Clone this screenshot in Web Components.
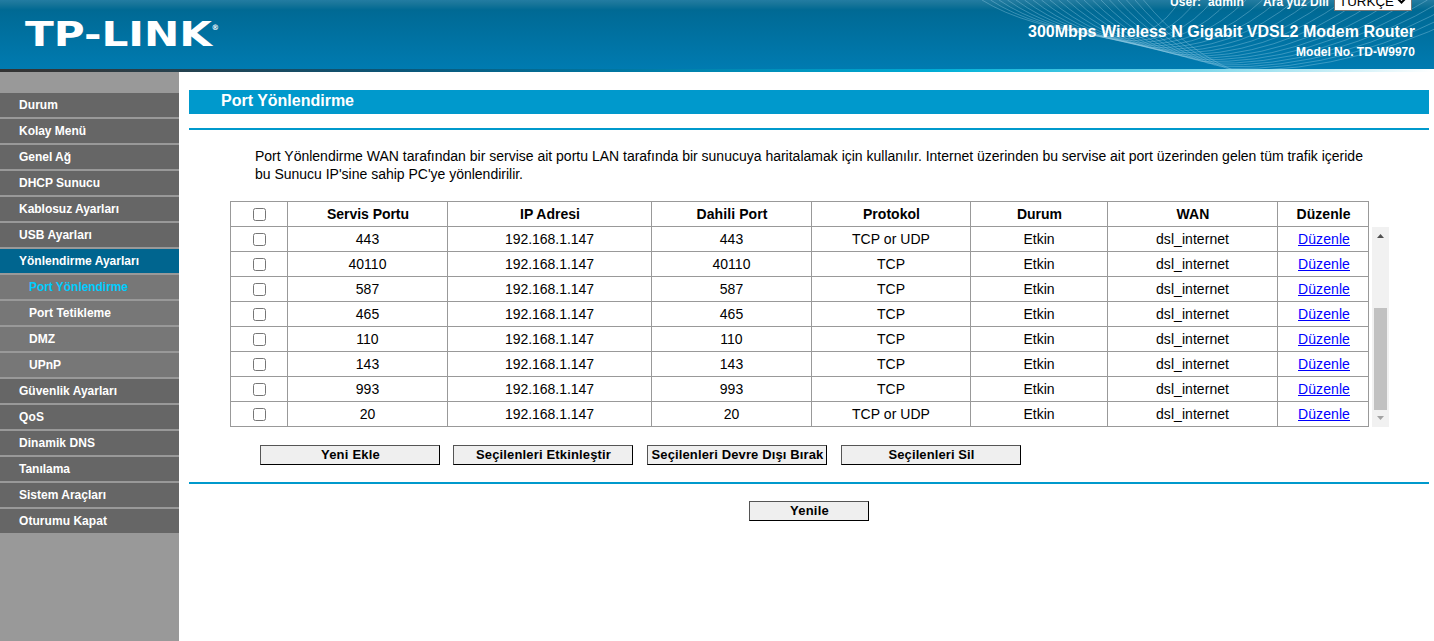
<!DOCTYPE html>
<html lang="tr">
<head>
<meta charset="utf-8">
<title>TD-W9970</title>
<style>
html,body{margin:0;height:100%;overflow:hidden;background:#fff}
body{font-family:"Liberation Sans",Arial,sans-serif;color:#000}
</style>
</head>
<body>
<router-page></router-page>
<script>
function define(name, html, setup) {
  const tpl = document.createElement('template');
  tpl.innerHTML = html;
  customElements.define(name, class extends HTMLElement {
    constructor() {
      super();
      this.attachShadow({mode: 'open'}).append(tpl.content.cloneNode(true));
    }
    connectedCallback() { if (setup) setup(this, this.shadowRoot); }
  });
}

/* Width-fitted text: keeps a label at its designed width by adjusting the tracking */
define('fit-text', `<style>:host{display:inline-block;white-space:pre}</style><span><slot></slot></span>`, (el, root) => {
  const span = root.querySelector('span');
  const target = +el.getAttribute('w');
  const width = span.getBoundingClientRect().width;
  const n = el.textContent.length;
  if (target && width) {
    const s = (target - width) / n;
    span.style.letterSpacing = s.toFixed(3) + 'px';
  }
});

define('page-header', `<style>
:host{display:block;position:relative;height:72px;overflow:hidden;color:#fff;font-weight:bold}
.bg{height:69px;background:linear-gradient(#237ca2 0,#187599 4px,#006993 10px,#006a95 12px,#007bb1 69px)}
.strip{height:3px;background:linear-gradient(90deg,#333 0,#333638 60px,#0b5678 400px,#0077a2 620px,#00abd4 930px,#0db6da 970px,#74d5e9 1180px,#b5e8f3 1300px,#fff 1434px)}
svg.art{position:absolute;left:0;top:0}
.row{position:absolute;inset:0 19px 0 26px;display:flex;justify-content:space-between}
.logo{margin-top:14px;display:block;overflow:visible}
.info{display:flex;flex-direction:column;align-items:flex-end;text-align:right}
.top{display:flex;align-items:flex-end;height:20px;margin-top:-9px;font-size:12px;margin-right:3px}
.top fit-text{line-height:14px;margin-bottom:2px}
.sel{box-sizing:border-box;width:78px;height:20px;border:1px solid #767676;background:#fff;color:#000;font-size:13.33px;font-weight:normal;display:flex;align-items:center;padding:0 4px;margin-left:5px}
.sel svg{margin-left:2px;flex:none}
h1{font-size:16px;line-height:20px;margin:11px 0 0}
h2{font-size:12px;line-height:14px;margin:3px 0 0}
</style>
<div class="bg"></div><div class="strip"></div>
<svg class="art" width="1434" height="69" fill="none" stroke="#9fd3e8" stroke-opacity=".36" stroke-width="1"></svg>
<div class="row">
<svg class="logo" width="200" height="40" fill="#fff"><text x="-1" y="32" font-family="DejaVu Sans" font-weight="bold" font-size="33" textLength="187" lengthAdjust="spacingAndGlyphs">TP-LINK</text><text x="185.500" y="15.500" font-family="DejaVu Sans" font-size="7.500" font-weight="bold">®</text></svg>
<div class="info">
<div class="top"><fit-text w="31">User:</fit-text><fit-text w="36" style="margin-left:7px">admin</fit-text><fit-text w="66" style="margin-left:19px">Ara yüz Dili</fit-text><div class="sel"><fit-text w="55" style="margin:2px 0 0">TÜRKÇE</fit-text><svg width="11" height="8" fill="none" stroke="#000" stroke-width="2"><path d="M1.500 1.500l4 4 4-4"/></svg></div></div>
<h1><fit-text w="387">300Mbps Wireless N Gigabit VDSL2 Modem Router</fit-text></h1>
<h2><fit-text w="119">Model No. TD-W9970</fit-text></h2>
</div></div>`, (el, root) => {
  let d = '';
  for (let i = 0; i < 20; i++) {
    const x = 982 + i * 8.5, bx = 1112 + i * 6.4, by = 37 + i * 1.75, rx = 1180 + i * 14;
    d += `M${x} 0Q${x + 42} ${by * .72} ${bx} ${by}Q${bx + 44 + i * 4.5} ${by + 3} ${rx + i * 2.5} 0`;
  }
  root.querySelector('.art').innerHTML = `<path d="${d}"/>`;
});

define('menu-item', `<style>
:host{display:block;height:24px;box-sizing:border-box;background:#666;color:#fff;padding-left:19px;font:bold 12px/24px "Liberation Sans",Arial,sans-serif;margin-bottom:2px}
:host([open]){background:#00658f}
:host([sub]){background:#777;padding-left:29px}
:host([active]){color:#0cf}
</style><slot></slot>`);

define('side-menu', `<style>
:host{display:block;width:179px;background:#999;padding-top:21px;box-sizing:border-box;flex:none}
</style><nav></nav>`, (el, root) => {
  root.querySelector('nav').innerHTML = [
    ['Durum', 39], ['Kolay Menü', 67], ['Genel Ağ', 52], ['DHCP Sunucu', 81], ['Kablosuz Ayarları', 100], ['USB Ayarları', 73],
    ['Yönlendirme Ayarları', 120, 'open'], ['Port Yönlendirme', 99, 'sub active'], ['Port Tetikleme', 82, 'sub'], ['DMZ', 26, 'sub'], ['UPnP', 32, 'sub'],
    ['Güvenlik Ayarları', 98], ['QoS', 25], ['Dinamik DNS', 76], ['Tanılama', 51], ['Sistem Araçları', 87], ['Oturumu Kapat', 88]
  ].map(([t, w, a = '']) => `<menu-item ${a}><fit-text w="${w}">${t}</fit-text></menu-item>`).join('');
});

define('check-box', `<style>
:host{display:block;box-sizing:border-box;width:13px;height:13px;border:1px solid #767676;border-radius:2.5px;background:#fff}
</style>`);

define('port-table', `<style>
:host{display:flex;width:1159px;font-size:14px}
.grid{display:grid;grid-template-columns:57px 160px 204px 160px 159px 137px 170px 91px;grid-auto-rows:25px;border:solid #999;border-width:1px 0 0 1px;width:1138px;flex:none}
.c{box-sizing:border-box;border:solid #999;border-width:0 1px 1px 0;display:flex;align-items:center;justify-content:center;min-width:0}
.h{font-weight:bold;padding-left:1px}
.e{padding-left:2px}
a{color:#00f;text-decoration:underline}
.bar{width:17px;height:200px;margin:26px 0 0 3px;background:#f1f1f1;display:flex;flex-direction:column;align-items:center;flex:none}
.thumb{width:13px;height:102px;background:#c1c1c1;margin-top:64px}
</style><div class="grid"></div>
<div class="bar"><svg width="17" height="17"><path d="M5 11h7L8.500 7z" fill="#505050"/></svg><div class="thumb"></div><svg width="17" height="17"><path d="M5 6h7L8.500 10z" fill="#a3a3a3"/></svg></div>`, (el, root) => {
  const head = [['Servis Portu', 82], ['IP Adresi', 60], ['Dahili Port', 71], ['Protokol', 57], ['Durum', 45], ['WAN', 33], ['Düzenle', 54]];
  const rows = [['443', 'TCP or UDP'], ['40110', 'TCP'], ['587', 'TCP'], ['465', 'TCP'], ['110', 'TCP'], ['143', 'TCP'], ['993', 'TCP'], ['20', 'TCP or UDP']];
  const W = {'TCP or UDP': 78, 'TCP': 28};
  const c = (s, i) => `<div class="c${i === 7 ? ' e' : ''}">${s}</div>`;
  root.querySelector('.grid').innerHTML = c('<check-box></check-box>') +
    head.map(([t, w]) => `<div class="c h"><fit-text w="${w}">${t}</fit-text></div>`).join('') +
    rows.map(([p, q]) => [
      '<check-box></check-box>', p, '<fit-text w="89">192.168.1.147</fit-text>', p,
      `<fit-text w="${W[q]}">${q}</fit-text>`, '<fit-text w="31">Etkin</fit-text>',
      '<fit-text w="73">dsl_internet</fit-text>', '<a><fit-text w="52" style="display:inline">Düzenle</fit-text></a>'
    ].map(c).join('')).join('');
});

define('push-button', `<style>
:host{display:flex;box-sizing:border-box;width:180px;height:20px;border:1px solid;border-color:#555 #000 #000 #555;background:#efefef;align-items:center;justify-content:center;font-weight:bold;font-size:13px;line-height:15px;padding:0 0 2px 1px;flex:none}
</style><slot></slot>`);

define('port-page', `<style>
:host{display:block;flex:1;padding:18px 5px 0 10px;min-width:0}
.title{height:24px;background:#09c;color:#fff;font-weight:bold;font-size:16px;line-height:21px;padding-left:32px}
.rule{height:2px;background:#09c}
.r1{margin-top:14px}
p{margin:17px 0 0 66px;font-size:14px;line-height:18px;height:36px}
p fit-text{display:block}
port-table{margin:18px 0 0 41px}
.buttons{display:flex;margin:18px 0 17px 71px}
.buttons push-button{margin-right:14px}
.buttons push-button:first-child{margin-right:13px}
.foot{display:flex;justify-content:center;padding-top:17px}
.foot push-button{width:120px}
</style>
<div class="title"><fit-text w="133">Port Yönlendirme</fit-text></div>
<div class="rule r1"></div>
<p><fit-text w="1108">Port Yönlendirme WAN tarafından bir servise ait portu LAN tarafında bir sunucuya haritalamak için kullanılır. Internet üzerinden bu servise ait port üzerinden gelen tüm trafik içeride</fit-text><fit-text w="268">bu Sunucu IP'sine sahip PC'ye yönlendirilir.</fit-text></p>
<port-table></port-table>
<div class="buttons"><push-button><fit-text w="59">Yeni Ekle</fit-text></push-button><push-button><fit-text w="135">Seçilenleri Etkinleştir</fit-text></push-button><push-button><fit-text w="172">Seçilenleri Devre Dışı Bırak</fit-text></push-button><push-button><fit-text w="86">Seçilenleri Sil</fit-text></push-button></div>
<div class="rule"></div>
<div class="foot"><push-button><fit-text w="39">Yenile</fit-text></push-button></div>`);

define('router-page', `<style>
:host{display:flex;flex-direction:column;height:641px;width:1434px}
.body{display:flex;flex:1}
</style><page-header></page-header><div class="body"><side-menu></side-menu><port-page></port-page></div>`);
</script>
</body>
</html>
